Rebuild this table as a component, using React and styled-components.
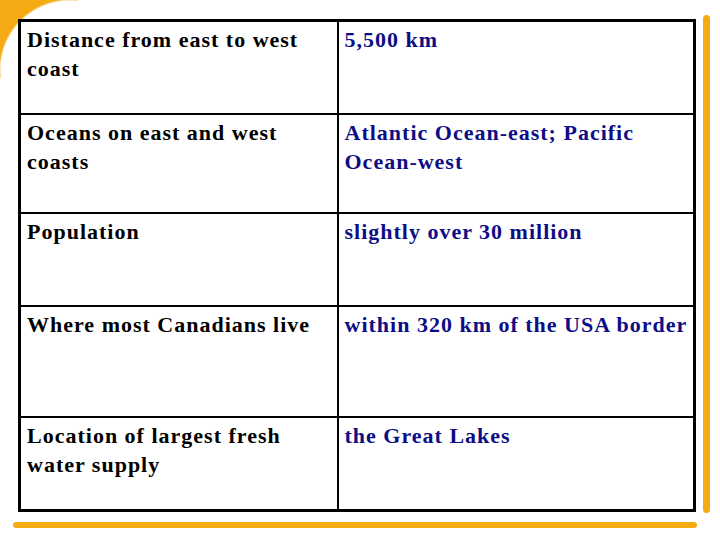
import React from "react";
import styled, { createGlobalStyle } from "styled-components";

const GlobalStyle = createGlobalStyle`
	html, body {
		margin: 0;
		padding: 0;
		background: #ffffff;
	}
`;

const orange = "#f5ab14";

const Slide = styled.div`
	position: relative;
	width: 720px;
	height: 540px;
	overflow: hidden;
	background: #ffffff;
	padding-top: 15px;
	box-sizing: border-box;
	display: flex;
	flex-direction: column;
	&::before {
		content: "";
		position: absolute;
		left: 0;
		top: 0;
		width: 78px;
		height: 78px;
		background: radial-gradient(circle at 70px 70px, #ffffff 69px, ${orange} 71px);
	}
`;

const Body = styled.div`
	position: relative;
	display: flex;
	align-items: flex-start;
`;

const Table = styled.table`
	margin: 4px 0 0 18px;
	width: 678px;
	border-collapse: collapse;
	table-layout: fixed;
	border: 3px solid #000000;
	background: #ffffff;
	font-family: "Liberation Serif", "Times New Roman", serif;
	font-weight: bold;
	font-size: 22px;
	letter-spacing: 1px;
	line-height: 29px;
`;

const Row = styled.tr`
	height: ${(props) => props.h}px;
`;

const Cell = styled.td`
	border: 2px solid #000000;
	vertical-align: top;
	padding: 3px 4px 0 6px;
	color: ${(props) => (props.accent ? "#0d0d86" : "#000000")};
	white-space: ${(props) => (props.nowrap ? "nowrap" : "normal")};
`;

const VBar = styled.div`
	margin-left: 7px;
	width: 7px;
	height: 498px;
	border-radius: 4px;
	background: ${orange};
`;

const HBar = styled.div`
	margin: 9px 0 0 13px;
	width: 684px;
	height: 6px;
	border-radius: 3px;
	background: ${orange};
`;

const rows = [
	["Distance from east to west coast", "5,500 km", 93],
	["Oceans on east and west coasts", "Atlantic Ocean-east; Pacific Ocean-west", 99],
	["Population", "slightly over 30 million", 93],
	["Where most Canadians live", "within 320 km of the USA border", 111],
	["Location of largest fresh water supply", "the Great Lakes", 94],
];

export default function App() {
	return (
		<>
			<GlobalStyle />
			<Slide>
				<Body>
					<Table>
						<colgroup>
							<col style={{ width: 318 }} />
							<col />
						</colgroup>
						<tbody>
							{rows.map(([label, value, h]) => (
								<Row key={label} h={h}>
									<Cell>{label}</Cell>
									<Cell accent nowrap={value.length < 35}>
										{value}
									</Cell>
								</Row>
							))}
						</tbody>
					</Table>
					<VBar />
				</Body>
				<HBar />
			</Slide>
		</>
	);
}
